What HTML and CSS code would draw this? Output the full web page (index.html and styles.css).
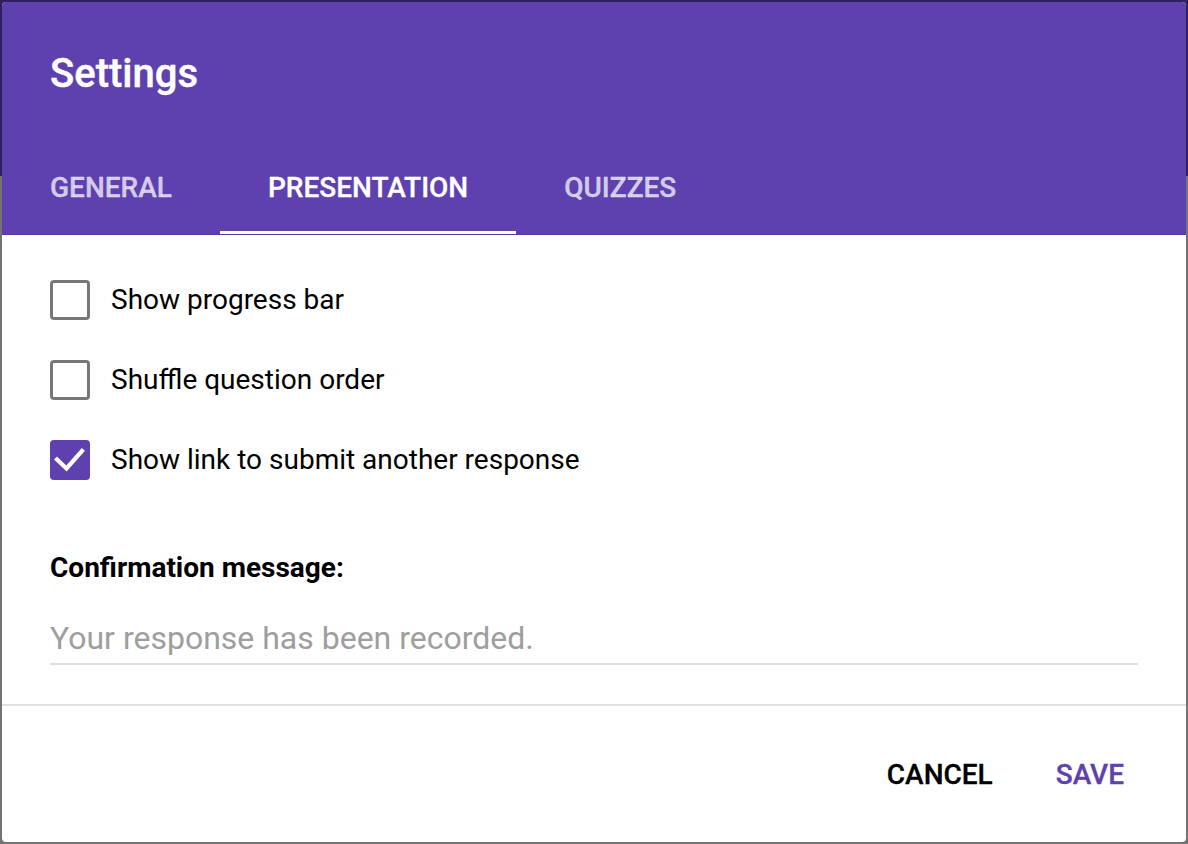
FILE: index.html
```html
<!DOCTYPE html>
<html>
<head>
<meta charset="utf-8">
<link rel="stylesheet" href="styles.css">
</head>
<body>
<div class="dialog">
  <div class="header">
    <h1 class="title">Settings</h1>
    <div class="tabs">
      <div class="tab">GENERAL</div>
      <div class="tab active">PRESENTATION</div>
      <div class="tab">QUIZZES</div>
    </div>
  </div>
  <div class="content">
    <label class="option">
      <span class="box"></span>
      <span class="label">Show progress bar</span>
    </label>
    <label class="option">
      <span class="box"></span>
      <span class="label">Shuffle question order</span>
    </label>
    <label class="option">
      <span class="box checked"><svg viewBox="0 0 40 40" width="40" height="40"><path d="M7 19.5 L16.5 28.5 L32 11" fill="none" stroke="#fff" stroke-width="4.2" stroke-linecap="square"/></svg></span>
      <span class="label">Show link to submit another response</span>
    </label>
    <div class="confirm-label">Confirmation message:</div>
    <div class="input">Your response has been recorded.</div>
  </div>
  <div class="footer">
    <div class="btn cancel">CANCEL</div>
    <div class="btn save">SAVE</div>
  </div>
</div>
</body>
</html>
```
FILE: styles.css
```css
html, body {
  margin: 0;
  padding: 0;
}
body {
  width: 1188px;
  height: 844px;
  box-sizing: border-box;
  padding: 2px;
  background: linear-gradient(to bottom, #2f2160 0, #2f2160 176px, #737373 176px, #737373 100%);
  font-family: Roboto, "Liberation Sans", sans-serif;
  overflow: hidden;
}
.dialog {
  width: 1184px;
  height: 840px;
  background: #fff;
  border-radius: 4px;
  overflow: hidden;
  display: flex;
  flex-direction: column;
}
.header {
  background: #5e41ae;
  height: 232px;
  border-bottom: 1px solid #5639a4;
  display: flex;
  flex-direction: column;
  justify-content: space-between;
}
.title {
  margin: 0;
  padding: 48px 48px 0;
  font-size: 40px;
  line-height: 48px;
  font-weight: 500;
  color: #fff;
  -webkit-text-stroke: 0.4px #fff;
}
.tabs {
  display: flex;
}
.tab {
  padding: 0 48px 4px;
  height: 80px;
  display: flex;
  align-items: center;
  font-size: 28px;
  font-weight: 500;
  color: rgba(255, 255, 255, 0.72);
  border-bottom: 3px solid transparent;
  -webkit-text-stroke: 0.3px currentColor;
}
.tab.active {
  color: #fff;
  border-bottom-color: #fff;
}
.content {
  flex: 1;
  padding: 45px 48px 0;
  border-bottom: 2px solid #e0e0e0;
}
.option {
  display: flex;
  align-items: center;
  gap: 21px;
  height: 40px;
  margin-bottom: 40px;
}
.box {
  width: 40px;
  height: 40px;
  box-sizing: border-box;
  border: 3px solid #777;
  border-radius: 4px;
  flex: none;
}
.box.checked {
  border: none;
  background: #5e41ae;
}
.box svg {
  display: block;
}
.label {
  font-size: 28px;
  line-height: 34px;
  color: #000;
}
.confirm-label {
  margin-top: 73px;
  font-size: 28px;
  line-height: 30px;
  font-weight: 700;
  color: #000;
}
.input {
  margin-top: 36px;
  font-size: 32px;
  line-height: 38px;
  color: #9e9e9e;
  padding-bottom: 6px;
  border-bottom: 2px solid #e0e0e0;
  width: 1088px;
}
.footer {
  height: 136px;
  display: flex;
  align-items: center;
  justify-content: flex-end;
  gap: 63px;
  padding-right: 62px;
}
.btn {
  font-size: 28px;
  font-weight: 500;
  -webkit-text-stroke: 0.3px currentColor;
}
.cancel {
  color: #000;
}
.save {
  color: #5e41ae;
}
```
